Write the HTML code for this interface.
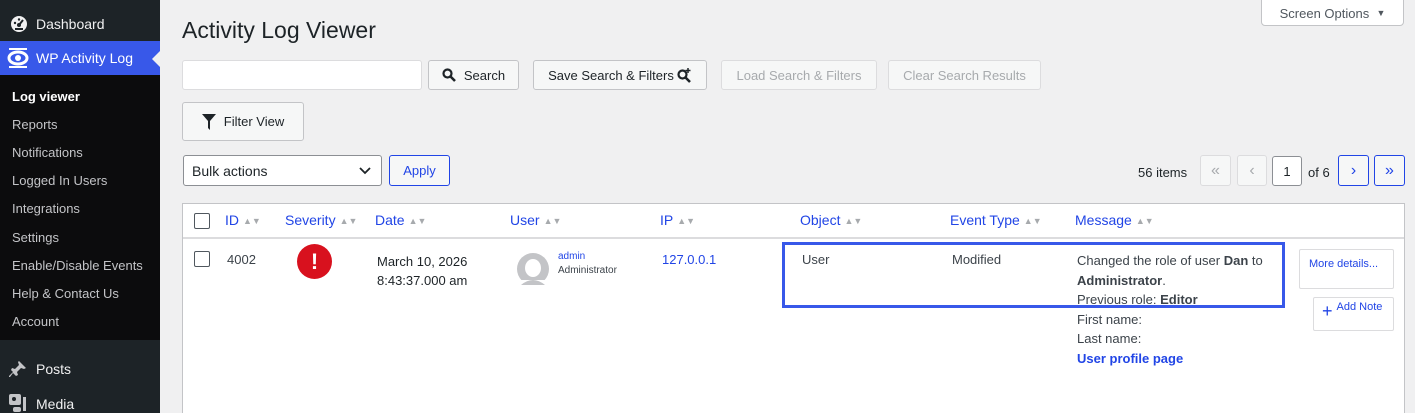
<!DOCTYPE html><html><head><style>
*{box-sizing:border-box;margin:0;padding:0}
html{width:1415px;height:413px;overflow:hidden}
body{width:1415px;height:413px;overflow:hidden;background:#f0f0f1;font-family:"Liberation Sans",sans-serif;font-size:13px;color:#1d2327;position:relative}
.a{position:absolute}
#sb{left:0;top:0;width:160px;height:413px;background:#1d2327}
.sub{left:0;top:75px;width:160px;height:265px;background:#0c0c0d}
.si{left:12px;color:#f0f0f1;font-size:13px}
.btn{position:absolute;border:1px solid #c3c4c7;background:#f6f7f7;border-radius:3px;font-size:13px;display:flex;align-items:center;justify-content:center;color:#1d2327}
.dis{color:#a7aaad;border-color:#dcdcde;background:#f6f7f7}
.bl{color:#2145e6}
.hd{top:212px;color:#2145e6;font-size:14px}
.ar{color:#a7aaad;font-size:9px;margin-left:4px;vertical-align:1px}
.cb{position:absolute;width:16px;height:16px;border:1px solid #50575e;border-radius:2px;background:#fff}
</style></head><body>
<div id="sb" class="a"></div>
<svg class="a" style="left:10px;top:15px" width="18" height="18" viewBox="0 0 18 18"><circle cx="9" cy="9" r="8" fill="#f0f0f1"/><circle cx="9" cy="10" r="2" fill="#1d2327"/><path d="M9 10L13 5" stroke="#1d2327" stroke-width="2"/><circle cx="5" cy="8" r="1.2" fill="#1d2327"/><circle cx="9" cy="4.5" r="1.2" fill="#1d2327"/><rect x="5" y="13" width="8" height="2" fill="#1d2327"/></svg>
<div class="a si" style="left:36px;top:16px;font-size:14px">Dashboard</div>
<div class="a" style="left:0;top:41px;width:160px;height:34px;background:#3858e9"></div>
<div class="a" style="left:152px;top:51px;width:0;height:0;border:8px solid transparent;border-right-color:#f0f0f1;border-left:none"></div>
<svg class="a" style="left:7px;top:47px" width="22" height="22" viewBox="0 0 22 22"><ellipse cx="11" cy="11" rx="9" ry="6" fill="none" stroke="#fff" stroke-width="3"/><circle cx="11" cy="11" r="3" fill="#fff"/><rect x="2" y="1" width="18" height="2" fill="#fff"/><rect x="2" y="19" width="18" height="2" fill="#fff"/></svg>
<div class="a si" style="left:36px;top:50px;font-size:14px;color:#fff">WP Activity Log</div>
<div class="a sub"></div>
<div class="a si" style="top:89px;font-weight:bold;color:#fff">Log viewer</div>
<div class="a si" style="top:117px;color:#c3c4c7">Reports</div>
<div class="a si" style="top:145px;color:#c3c4c7">Notifications</div>
<div class="a si" style="top:173px;color:#c3c4c7">Logged In Users</div>
<div class="a si" style="top:201px;color:#c3c4c7">Integrations</div>
<div class="a si" style="top:230px;color:#c3c4c7">Settings</div>
<div class="a si" style="top:258px;color:#c3c4c7">Enable/Disable Events</div>
<div class="a si" style="top:286px;color:#c3c4c7">Help &amp; Contact Us</div>
<div class="a si" style="top:314px;color:#c3c4c7">Account</div>
<svg class="a" style="left:9px;top:360px" width="18" height="18" viewBox="0 0 18 18"><path d="M10 1L17 8L15 9L12 8L8 12L9 15L7 16L4 13L1 17L0 17L0 16L4 12L2 10L3 8L6 9L10 5L9 2Z" fill="#c3c4c7"/></svg>
<div class="a si" style="left:36px;top:361px;font-size:14px">Posts</div>
<svg class="a" style="left:9px;top:394px" width="20" height="19" viewBox="0 0 20 19"><rect x="0" y="0" width="12" height="11" rx="2" fill="#c3c4c7"/><circle cx="5" cy="5" r="2" fill="#1d2327"/><rect x="14" y="3" width="3" height="14" fill="#c3c4c7"/><rect x="4" y="13" width="8" height="5" rx="2" fill="#c3c4c7"/></svg>
<div class="a si" style="left:36px;top:396px;font-size:14px">Media</div>

<div class="a" style="left:1261px;top:-4px;width:143px;height:30px;background:#fff;border:1px solid #c3c4c7;border-radius:4px;display:flex;align-items:center;justify-content:center;color:#50575e;padding-top:4px">Screen Options &nbsp;<span style="font-size:9px">▼</span></div>
<div class="a" style="left:182px;top:17px;font-size:23px;color:#1d2327">Activity Log Viewer</div>
<div class="a" style="left:182px;top:60px;width:240px;height:30px;background:#fff;border:1px solid #dcdcde;border-radius:3px"></div>
<div class="btn" style="left:428px;top:60px;width:91px;height:30px"><svg width="14" height="14" viewBox="0 0 14 14" style="margin-right:8px"><circle cx="5.5" cy="5.5" r="4" fill="none" stroke="#1d2327" stroke-width="2.2"/><path d="M8.5 8.5L13 13" stroke="#1d2327" stroke-width="2.6"/></svg>Search</div>
<div class="btn" style="left:533px;top:60px;width:174px;height:30px">Save Search &amp; Filters <svg width="15" height="15" viewBox="0 0 15 15" style="margin-left:3px"><circle cx="5.5" cy="6.5" r="4" fill="none" stroke="#1d2327" stroke-width="2.2"/><path d="M8.5 9.5L13 14" stroke="#1d2327" stroke-width="2.6"/><path d="M11 0V5M8.5 2.5H13.5" stroke="#1d2327" stroke-width="1.5"/></svg></div>
<div class="btn dis" style="left:721px;top:60px;width:156px;height:30px">Load Search &amp; Filters</div>
<div class="btn dis" style="left:888px;top:60px;width:153px;height:30px">Clear Search Results</div>
<div class="btn" style="left:182px;top:102px;width:122px;height:39px"><svg width="14" height="16" viewBox="0 0 14 16" style="margin-right:8px"><path d="M0 0H14L8 7V16L6 14V7Z" fill="#1d2327"/></svg>Filter View</div>
<div class="a" style="left:183px;top:155px;width:199px;height:31px;background:#fff;border:1px solid #8c8f94;border-radius:3px;padding:7px 8px;font-size:14px">Bulk actions<svg style="position:absolute;right:10px;top:11px" width="12" height="8"><path d="M1 1L6 6L11 1" stroke="#1d2327" stroke-width="1.8" fill="none"/></svg></div>
<div class="btn" style="left:389px;top:155px;width:61px;height:31px;border-color:#2145e6;color:#2145e6">Apply</div>
<div class="a" style="left:1138px;top:165px">56 items</div>
<div class="btn dis" style="left:1200px;top:155px;width:31px;height:31px;font-size:16px">«</div>
<div class="btn dis" style="left:1237px;top:155px;width:30px;height:31px;font-size:16px">‹</div>
<div class="btn" style="left:1272px;top:156px;width:30px;height:30px;background:#fff;border-color:#8c8f94">1</div>
<div class="a" style="left:1308px;top:165px">of 6</div>
<div class="btn" style="left:1338px;top:155px;width:31px;height:31px;border-color:#2145e6;color:#2145e6;font-size:16px">›</div>
<div class="btn" style="left:1374px;top:155px;width:31px;height:31px;border-color:#2145e6;color:#2145e6;font-size:16px">»</div>

<div class="a" style="left:182px;top:203px;width:1223px;height:220px;background:#fff;border:1px solid #c3c4c7"></div>
<div class="a" style="left:183px;top:237px;width:1221px;height:2px;background:#dcdcde"></div>
<div class="cb" style="left:194px;top:213px"></div>
<div class="a hd" style="left:225px">ID<span class="ar">▲▼</span></div>
<div class="a hd" style="left:285px">Severity<span class="ar">▲▼</span></div>
<div class="a hd" style="left:375px">Date<span class="ar">▲▼</span></div>
<div class="a hd" style="left:510px">User<span class="ar">▲▼</span></div>
<div class="a hd" style="left:660px">IP<span class="ar">▲▼</span></div>
<div class="a hd" style="left:800px">Object<span class="ar">▲▼</span></div>
<div class="a hd" style="left:950px">Event Type<span class="ar">▲▼</span></div>
<div class="a hd" style="left:1075px">Message<span class="ar">▲▼</span></div>
<div class="cb" style="left:194px;top:251px"></div>
<div class="a" style="left:227px;top:252px;color:#3c434a">4002</div>
<div class="a" style="left:297px;top:244px;width:35px;height:35px;border-radius:50%;background:#d8111e;color:#fff;font-weight:bold;font-size:22px;text-align:center;line-height:35px">!</div>
<div class="a" style="left:377px;top:252px;line-height:19px;color:#1d2327">March 10, 2026<br>8:43:37.000 am</div>
<svg class="a" style="left:517px;top:253px" width="32" height="32" viewBox="0 0 32 32"><circle cx="16" cy="16" r="16" fill="#c3c4c7"/><ellipse cx="16" cy="15" rx="8" ry="9" fill="#fff"/><rect x="0" y="27" width="32" height="5" fill="#fff"/><path d="M4 32Q16 22 28 32Z" fill="#c3c4c7"/></svg>
<div class="a" style="left:558px;top:250px;font-size:10px;line-height:14px"><span class="bl">admin</span><br><span style="color:#3c434a">Administrator</span></div>
<div class="a bl" style="left:662px;top:252px">127.0.0.1</div>
<div class="a" style="left:782px;top:242px;width:503px;height:66px;border:3px solid #3858e9"></div>
<div class="a" style="left:802px;top:252px;color:#3c434a">User</div>
<div class="a" style="left:952px;top:252px;color:#3c434a">Modified</div>
<div class="a" style="left:1077px;top:251px;line-height:19.5px;color:#3c434a">Changed the role of user <b>Dan</b> to<br><b>Administrator</b>.<br>Previous role: <b>Editor</b><br>First name:<br>Last name:<br><b class="bl">User profile page</b></div>
<div class="a" style="left:1299px;top:249px;width:95px;height:40px;border:1px solid #dcdcde;border-radius:2px;color:#2145e6;font-size:11px;padding:8px 0 0 9px">More details...</div>
<div class="a" style="left:1313px;top:297px;width:81px;height:34px;border:1px solid #dcdcde;border-radius:2px;color:#2145e6;font-size:11px;padding:3px 0 0 8px"><span style="font-size:18px;vertical-align:-6px;margin-right:4px">+</span><span style="vertical-align:top">Add Note</span></div>
</body></html>
